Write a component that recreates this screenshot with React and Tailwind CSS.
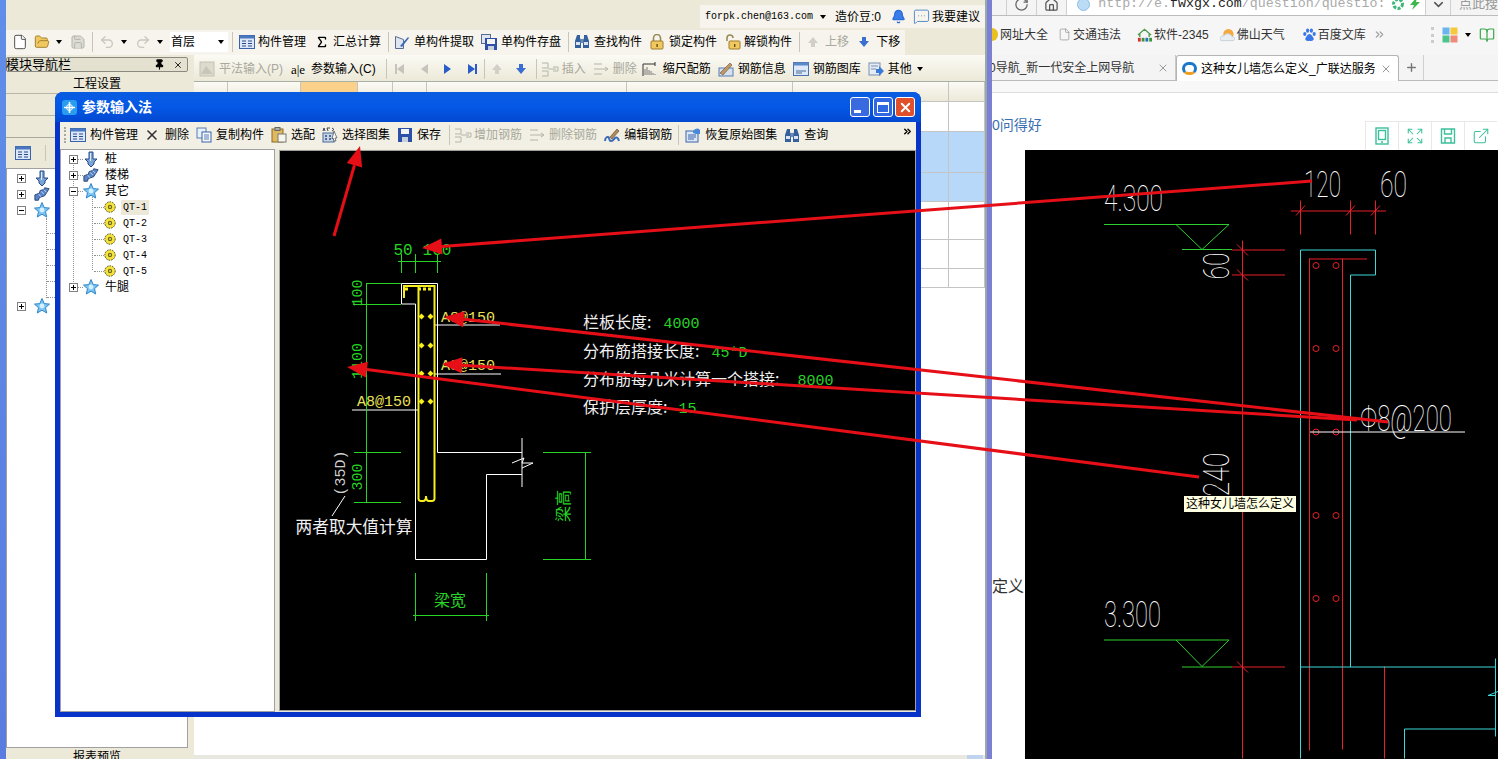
import React from 'react';
import clsx from 'clsx';
import { File, FolderOpen, Save, Undo2, Redo2, Sigma, Bell, MessageSquareMore, RotateCw, Home, ChevronDown, ChevronsRight, X, Plus, Expand, ExternalLink, BookOpen, Pin } from 'lucide-react';

const CJK = "Noto Sans CJK SC, sans-serif";
const MONO = "Liberation Mono, Noto Sans CJK SC, monospace";
const GREEN = '#25d425';

/* ---------- small toolbar icons ---------- */
const Caret = ({ className }) => (
  <span className={clsx('inline-block w-0 h-0 shrink-0 border-x-[3px] border-t-[4px] border-x-transparent border-t-black', className)} />
);

const Sep = ({ className }) => <span className={clsx('w-px h-[20px] bg-[#c8c6b8] shrink-0', className)} />;

const ManageIcon = () => (
  <svg width="16" height="14" viewBox="0 0 16 14" className="shrink-0">
    <rect x="0.5" y="0.5" width="15" height="13" fill="#dce8f8" stroke="#3a62a8" />
    <rect x="0.5" y="0.5" width="15" height="3" fill="#4a78c0" />
    <path d="M3 6h4M3 8.5h4M3 11h4M9 6h4M9 8.5h4M9 11h4" stroke="#2a4a88" />
  </svg>
);

const ExtractIcon = () => (
  <svg width="16" height="16" viewBox="0 0 16 16" className="shrink-0">
    <path d="M1.5 2.5v12h8v-9z" fill="#dfe6f2" stroke="#5a6c90" />
    <path d="M6 12l8-9 1 1-7 9z" fill="#3a6ab8" />
  </svg>
);

const DiskIcon = ({ small }) => (
  <svg width="16" height="16" viewBox="0 0 16 16" className="shrink-0">
    {small && <rect x="0.5" y="0.5" width="9" height="9" fill="#dfe6f2" stroke="#5a6c90" />}
    <rect x={small ? 4 : 1} y={small ? 4 : 1} width={small ? 12 : 14} height={small ? 12 : 14} fill="#2c50a8" />
    <rect x={small ? 6 : 4} y={small ? 5 : 2} width={small ? 8 : 8} height="5" fill="#f4f4f4" />
    <rect x={small ? 7 : 5} y={small ? 12 : 10} width="6" height={small ? 4 : 5} fill="#c8d0e0" />
  </svg>
);

const BinoIcon = () => (
  <svg width="16" height="15" viewBox="0 0 16 15" className="shrink-0">
    <path d="M3 1h3v3l1 2v8H1V7z" fill="#34609c" />
    <path d="M10 1h3l2 6v7H9V6l1-2z" fill="#34609c" />
    <rect x="2" y="8" width="4" height="3" fill="#d8e4f4" />
    <rect x="10" y="8" width="4" height="3" fill="#d8e4f4" />
    <rect x="6.5" y="5" width="3" height="4" fill="#6a8ab8" />
  </svg>
);

const LockIcon = ({ open }) => (
  <svg width="16" height="16" viewBox="0 0 16 16" className="shrink-0">
    <path d={open ? 'M2 7V4a3 3 0 0 1 6 0' : 'M4.5 7V4a3.5 3.5 0 0 1 7 0v3'} fill="none" stroke="#9a8a58" strokeWidth="1.6" />
    <rect x={open ? 4 : 2} y="7" width={open ? 11 : 12} height="8" rx="1" fill="#f0c860" stroke="#a07c28" />
    <rect x={open ? 9 : 7.4} y="10" width="1.4" height="3" fill="#6a4c10" />
  </svg>
);

const UpDown = ({ up, gray }) => (
  <svg width="16" height="14" viewBox="0 0 16 14" className="shrink-0">
    <path d={up ? 'M8 2l5 6h-3v4H6V8H3z' : 'M6 2h4v4h3l-5 6-5-6h3z'} fill={gray ? '#d0d0c8' : '#3a6ed0'} />
  </svg>
);

const NavTri = ({ dir, bar, gray }) => (
  <svg width="12" height="14" viewBox="0 0 12 14" className="shrink-0">
    <path d={dir === 'left' ? 'M10 2v10L3 7z' : 'M2 2v10l7-5z'} fill={gray ? '#c4c4bc' : '#2a5cc8'} />
    {bar && <rect x={dir === 'left' ? 1 : 9} y="2" width="2" height="10" fill={gray ? '#c4c4bc' : '#2a5cc8'} />}
  </svg>
);

const InsertIcon = ({ del }) => (
  <svg width="18" height="16" viewBox="0 0 18 16" className="shrink-0" fill="none" stroke="#b4b4a8">
    {del ? <path d="M1 3h8M1 8h13M1 13h8M12 6l3 2-3 2" /> : <path d="M1 2h6v5H1M1 10h6v5H1M7 8h8M12 6h5v4h-5" />}
  </svg>
);

const DrawingIcon = ({ gray }) => (
  <svg width="16" height="16" viewBox="0 0 16 16" className="shrink-0">
    {gray ? (
      <>
        <rect x="1" y="1" width="14" height="14" fill="#dddbcc" stroke="#c4c2b4" />
        <path d="M2 13l5-8 7 8z" fill="#c8c6b8" />
      </>
    ) : (
      <>
        <path d="M1 3h12M1 3v12M13 1v4" fill="none" stroke="#333" />
        <path d="M3 14V8M5 14V6M7 14V9M9 14V10M11 14V12M13 14V13" stroke="#777" />
      </>
    )}
  </svg>
);

const RebarInfoIcon = () => (
  <svg width="16" height="16" viewBox="0 0 16 16" className="shrink-0">
    <rect x="1" y="7" width="14" height="8" fill="#d4e0f0" stroke="#5a7cb0" />
    <path d="M2 12L12 2l2 2L5 14z" fill="#c09868" stroke="#6a5030" strokeWidth="0.6" />
  </svg>
);

const LibraryIcon = () => (
  <svg width="16" height="14" viewBox="0 0 16 14" className="shrink-0">
    <rect x="0.5" y="0.5" width="15" height="13" fill="#dce8f8" stroke="#4a72b0" />
    <rect x="0.5" y="0.5" width="15" height="3" fill="#5a88c8" />
    <path d="M3 9h10M3 11h6" stroke="#4a6a98" />
  </svg>
);

const OtherIcon = () => (
  <svg width="16" height="16" viewBox="0 0 16 16" className="shrink-0">
    <rect x="1" y="2" width="11" height="12" fill="#e4ecf6" stroke="#7a90b0" />
    <path d="M3 5h7M3 8h5" stroke="#7a90b0" />
    <path d="M8 8h3V5l5 5-5 5v-3H8z" fill="#3a7ad8" />
  </svg>
);

const CopyIcon = () => (
  <svg width="16" height="16" viewBox="0 0 16 16" className="shrink-0">
    <rect x="1" y="1" width="9" height="10" fill="#e8f0fa" stroke="#5a7cb0" />
    <rect x="6" y="5" width="9" height="10" fill="#f4f8fd" stroke="#3a62a8" />
    <path d="M8 8h5M8 10h5M8 12h5" stroke="#5a7cb0" />
  </svg>
);

const PasteIcon = () => (
  <svg width="16" height="16" viewBox="0 0 16 16" className="shrink-0">
    <rect x="1" y="2" width="11" height="13" fill="#e0b860" stroke="#8a6a20" />
    <rect x="4" y="0.5" width="5" height="3" fill="#b0b0a8" stroke="#666" />
    <rect x="7" y="7" width="8" height="8" fill="#f6f6f0" stroke="#7a7a70" />
  </svg>
);

const AtlasIcon = () => (
  <svg width="16" height="16" viewBox="0 0 16 16" className="shrink-0">
    <path d="M1 4l1-3 1 3M5 1l1 3M8 1H5M10 1l2 1.5L10 4" fill="none" stroke="#445" />
    <rect x="1" y="6" width="11" height="9" fill="#c8d4e4" stroke="#4a6a98" />
    <path d="M3 9h2M7 9h2M3 12h2M7 12h2" stroke="#2a4a88" strokeWidth="1.4" />
    <path d="M12 4l3 7-2 0 1 3-2 0-1-3-1 1z" fill="#f8f8f8" stroke="#333" strokeWidth="0.6" />
  </svg>
);

const EditRebarIcon = () => (
  <svg width="16" height="15" viewBox="0 0 16 15" className="shrink-0">
    <path d="M1 13c0-4 3-5 4-3s0 3 2 3 3-2 4-3 3-1 4 3" fill="none" stroke="#3a6ab8" strokeWidth="2" />
    <path d="M6 9l7-8 2 2-7 8z" fill="#b08a58" stroke="#5a4020" strokeWidth="0.6" />
  </svg>
);

const RestoreIcon = () => (
  <svg width="16" height="16" viewBox="0 0 16 16" className="shrink-0">
    <rect x="1" y="4" width="12" height="11" fill="#dce8f8" stroke="#3a62a8" />
    <path d="M3 8h8M3 10h8M3 12h6" stroke="#3a62a8" />
    <path d="M8 6a4 4 0 0 1 7-3v4h-4z" fill="#4a88d8" />
  </svg>
);

const Tool = ({ icon, label, gray, gap = 'gap-[4px]', className }) => (
  <div className={clsx('flex items-center whitespace-nowrap shrink-0', gap, gray ? 'text-[#a8a89c]' : 'text-black', className)}>
    {icon}
    <span>{label}</span>
  </div>
);

/* ---------- tree icons ---------- */
const Star = () => (
  <svg width="16" height="16" viewBox="0 0 16 16" className="shrink-0">
    <path d="M8 .5l2.2 5.1 5.3.5-4 3.6 1.2 5.3L8 12.2l-4.7 2.8 1.2-5.3-4-3.6 5.3-.5z" fill="#7cc4f2" stroke="#2f86c8" />
    <circle cx="8" cy="8" r="2.4" fill="#d6f0ff" />
  </svg>
);

const Pile = () => (
  <svg width="16" height="16" viewBox="0 0 16 16" className="shrink-0">
    <path d="M6 1h4v7h4l-3 3v2l-3 3-3-3v-2L2 8h4z" fill="#7aa4d8" stroke="#2a4a88" />
    <path d="M7.5 2v8" stroke="#e0ecf8" />
  </svg>
);

const Stairs = () => (
  <svg width="16" height="16" viewBox="0 0 18 16" className="shrink-0">
    <path d="M1 15V9l5-2 1-3 4-1 1-2 5 1-5 8-6 2-1 3z" fill="#5a84c8" stroke="#23406f" />
    <path d="M5 8l3 3M8 5l3 3M11 3l3 3" stroke="#cfe0f4" />
  </svg>
);

const Gear = () => (
  <svg width="12" height="12" viewBox="0 0 12 12" className="shrink-0">
    <circle cx="6" cy="6" r="5.2" fill="#f6e43c" stroke="#4a4a1a" strokeDasharray="1.6 1" />
    <circle cx="6" cy="6" r="2.2" fill="#6a6a20" />
    <circle cx="6" cy="6" r="1" fill="#f6e43c" />
  </svg>
);

const Box = ({ open }) => (
  <span className="relative z-10 flex items-center justify-center w-[9px] h-[9px] shrink-0 bg-white border border-[#808080]">
    <span className="absolute w-[5px] h-px bg-black" />
    {!open && <span className="absolute w-px h-[5px] bg-black" />}
  </span>
);

const TreeRow = ({ box, icon, label, sub, active }) => (
  <div className={clsx('relative flex items-center h-[16px] whitespace-nowrap', sub ? 'pl-[45px]' : 'pl-[8px]')}>
    {box}
    {!sub && <span className="w-[5px] border-t border-dotted border-[#909090]" />}
    {sub && <span className="w-[10px] border-t border-dotted border-[#909090] -ml-[12px]" />}
    {icon}
    {sub ? (
      <span className={clsx("ml-[5px] px-[2px] font-['Liberation_Mono',monospace] text-[10px]", active && 'bg-[#ece9d8]')}>{label}</span>
    ) : (
      <span className="ml-[6px] text-[12px]">{label}</span>
    )}
  </div>
);

/* ---------- CAD drawings ---------- */
const Cadtext = ({ x, y, size, fill = GREEN, rotate, children, font = MONO, ...rest }) => (
  <text x={x} y={y} fontSize={size} fill={fill} fontFamily={font} textAnchor="middle" transform={rotate ? `rotate(${rotate} ${x} ${y})` : undefined} {...rest}>
    {children}
  </text>
);

const ParamDrawing = () => {
  const dots = [316.5, 345.5, 373.5, 401.5];
  return (
    <svg viewBox="280 151 635 559" className="block w-full h-full" fill="none">
      {/* white outline */}
      <path d="M401.5 304V283.5H437.5V452.5H522M401.5 304H415.5V559.5H486.5V474.5H522M522 438V487M512 463L524 458L522 463H533L522 468M434 325H500M434 374H501M352 410H418M345 496L332 516" stroke="#fff" />
      {/* yellow rebar */}
      <path d="M404 298V286H434.5V499Q434 501 432 501H429Q426 501 426 496Q426 501 423 501H421Q419 501 418.5 499V287" stroke="#f6ee1e" strokeWidth="2" />
      <path d="M405 289h4M418 289h15" stroke="#f6ee1e" strokeWidth="3" strokeDasharray="3 2" />
      {dots.map((y) => (
        <g key={y} fill="#f6ee1e">
          <path d={`M421.5 ${y - 3}l3 3-3 3-3-3z`} />
          <path d={`M430.5 ${y - 3}l3 3-3 3-3-3z`} />
        </g>
      ))}
      {/* green dimensions */}
      <path d="M366.5 283V503M366 283.5H401M353 304.5H401M354 452.5H401M354 502.5H401M401.5 254V273M415.5 254V273M437.5 254V273M398 261.5H441M543 452.5H591M543 559.5H591M585.5 452V560M415.5 573V621M486.5 573V621M413 615.5H489" stroke={GREEN} />
      <Cadtext x={403} y={255} size={16}>50</Cadtext>
      <Cadtext x={437} y={255} size={16}>160</Cadtext>
      <Cadtext x={362} y={293} size={15} rotate={-90}>100</Cadtext>
      <Cadtext x={362} y={361} size={15} rotate={-90}>1100</Cadtext>
      <Cadtext x={362} y={477} size={15} rotate={-90}>300</Cadtext>
      <Cadtext x={345} y={473} size={15} fill="#cfcfcf" rotate={-90}>(35D)</Cadtext>
      <Cadtext x={354} y={533} size={16.7} fill="#f0f0f0" font={CJK}>两者取大值计算</Cadtext>
      <Cadtext x={569} y={506} size={16} rotate={-90} font={CJK}>梁高</Cadtext>
      <Cadtext x={450} y={606} size={16} font={CJK}>梁宽</Cadtext>
      <g fill="#ece05a" fontSize="15" fontFamily={MONO}>
        <text x="441" y="322">A8@150</text>
        <text x="441" y="370">A8@150</text>
        <text x="357" y="406">A8@150</text>
      </g>
      {/* parameter list */}
      <g fontSize="16" fontFamily={CJK} fill="#f0f0f0">
        <text x="583" y="328">栏板长度:<tspan fill={GREEN} fontSize="15" fontFamily={MONO} dx="12">4000</tspan></text>
        <text x="583" y="357">分布筋搭接长度:<tspan fill={GREEN} fontSize="15" fontFamily={MONO} dx="12">45*D</tspan></text>
        <text x="583" y="385">分布筋每几米计算一个搭接:<tspan fill={GREEN} fontSize="15" fontFamily={MONO} dx="18">8000</tspan></text>
        <text x="583" y="413">保护层厚度:<tspan fill={GREEN} fontSize="15" fontFamily={MONO} dx="11">15</tspan></text>
      </g>
    </svg>
  );
};

const ThinText = ({ x, y, w, size = 36, rotate, children }) => (
  <text
    x={x}
    y={y}
    fontSize={size}
    fontWeight="100"
    fill="#fff"
    fontFamily="Roboto, Lato, sans-serif"
    textLength={w}
    lengthAdjust="spacingAndGlyphs"
    transform={rotate ? `rotate(${rotate} ${x} ${y})` : undefined}
  >
    {children}
  </text>
);

const SectionDrawing = () => {
  const rows = [266, 349, 432.5, 516, 599];
  return (
    <svg viewBox="1025 151 473 608" className="block w-full h-full" fill="none">
      {/* level marks */}
      <path d="M1104 225H1229L1202 250L1176 225M1182 250H1232M1104 640.5H1229L1202 667L1176 640.5M1182 667.5H1232" stroke="#2fce2f" />
      {/* red construction lines */}
      <path d="M1242.5 241V759M1232 250.5H1285M1232 275.5H1285M1232 667.5H1285M1291 211.5H1386M1300.5 201V235M1350.5 201V235M1375.5 201V235M1309.5 259V751M1342.5 259V750M1309 259.5H1367M1384.5 667V759" stroke="#e8202a" />
      <path d="M1237 245L1248 256M1237 270L1248 281M1237 662L1248 673M1296 216L1305 206M1346 216L1355 206M1371 216L1380 206" stroke="#e8202a" />
      {rows.map((y) => (
        <g key={y} stroke="#e8202a">
          <circle cx="1316" cy={y} r="3" />
          <circle cx="1336" cy={y} r="3" />
        </g>
      ))}
      {/* cyan outline */}
      <path d="M1300.5 759V250.5H1375.5V275.5H1350.5V667.5M1300 667.5H1495.5M1495.5 659V737M1495.5 696H1488L1498 692M1404.5 759V729.5H1495" stroke="#3fd8d8" />
      <path d="M1310 432.5H1465" stroke="#fff" />
      <ThinText x={1104} y={211} w={59}>4.300</ThinText>
      <ThinText x={1304} y={197} w={37}>120</ThinText>
      <ThinText x={1380} y={197} w={27}>60</ThinText>
      <ThinText x={1229} y={280} w={27} rotate={-90}>60</ThinText>
      <ThinText x={1104} y={627} w={57}>3.300</ThinText>
      <ThinText x={1360} y={431} w={92}>Φ8@200</ThinText>
      <ThinText x={1229} y={497} w={44} rotate={-90}>240</ThinText>
    </svg>
  );
};

const Arrow = ({ from, to }) => {
  const dx = to[0] - from[0];
  const dy = to[1] - from[1];
  const len = Math.hypot(dx, dy);
  const ux = dx / len;
  const uy = dy / len;
  const bx = to[0] - ux * 20;
  const by = to[1] - uy * 20;
  return (
    <g>
      <line x1={from[0]} y1={from[1]} x2={bx} y2={by} stroke="#e60f17" strokeWidth="3" />
      <polygon points={`${to[0]},${to[1]} ${bx - uy * 8},${by + ux * 8} ${bx + uy * 8},${by - ux * 8}`} fill="#e60f17" />
    </g>
  );
};

/* ---------- main application behind the dialog ---------- */
const GRID_ROWS = [
  'h-[20px] bg-gradient-to-b from-[#fbfaf4] to-[#ece9d8]',
  'h-[30px] bg-white',
  'h-[41px] bg-[#b8d8fa]',
  'h-[29px] bg-[#b8d8fa]',
  'h-[38px] bg-white',
  'h-[29px] bg-white',
  'h-[19px] bg-white',
];
const GRID_COLS = ['w-[34px]', 'w-[73px]', 'w-[57px]', 'w-[35px]', 'w-[34px]', 'w-[200px]', 'w-[166px]', 'w-[156px]', 'w-[36px]'];

const DataGrid = () => (
  <div className="flex-1 bg-white flex flex-col min-h-0">
    {GRID_ROWS.map((row, r) => (
      <div key={r} className={clsx('flex border-b border-[#c4c4c4]', row)}>
        {GRID_COLS.map((col, c) => (
          <div key={c} className={clsx('h-full border-r border-[#c4c4c4]', col, r === 0 && c === 2 && 'bg-[#fbd08a]')} />
        ))}
      </div>
    ))}
    <div className="mt-auto h-[4px] bg-[#e8e8e0] flex justify-end">
      <span className="w-[16px] bg-[#c0d4f0] mr-[2px]" />
    </div>
  </div>
);

const TopToolbar = () => (
  <div className="h-[25px] w-[899px] flex items-center bg-[#f6f4ec] text-[12px] pb-[2px]">
    <File size={16} strokeWidth={1.4} className="ml-[6px] shrink-0 text-[#444] fill-white" />
    <FolderOpen size={16} strokeWidth={1.4} className="ml-[6px] shrink-0 text-[#a07c28] fill-[#f0c860]" />
    <Caret className="ml-[6px]" />
    <Save size={16} strokeWidth={1.4} className="ml-[8px] shrink-0 text-[#b0b0a8] fill-[#dcdcd4]" />
    <Sep className="ml-[6px]" />
    <Undo2 size={16} strokeWidth={2} className="ml-[6px] shrink-0 text-[#c8c8c0]" />
    <Caret className="ml-[6px] border-t-[#a8a8a0]" />
    <Redo2 size={16} strokeWidth={2} className="ml-[8px] shrink-0 text-[#c8c8c0]" />
    <Caret className="ml-[6px] border-t-[#a8a8a0]" />
    <div className="ml-[7px] w-[58px] h-[20px] bg-white flex items-center justify-between pl-[1px] pr-[4px] shrink-0">
      <span>首层</span>
      <Caret />
    </div>
    <Sep className="ml-[4px]" />
    <Tool className="ml-[6px]" gap="gap-[3px]" icon={<ManageIcon />} label="构件管理" />
    <Tool className="ml-[9px]" icon={<Sigma size={14} strokeWidth={2.4} className="shrink-0" />} label="汇总计算" />
    <Sep className="ml-[7px]" />
    <Tool className="ml-[5px]" icon={<ExtractIcon />} label="单构件提取" />
    <Tool className="ml-[7px]" icon={<DiskIcon small />} label="单构件存盘" />
    <Sep className="ml-[7px]" />
    <Tool className="ml-[5px]" icon={<BinoIcon />} label="查找构件" />
    <Tool className="ml-[7px]" icon={<LockIcon />} label="锁定构件" />
    <Tool className="ml-[8px]" gap="gap-[3px]" icon={<LockIcon open />} label="解锁构件" />
    <Sep className="ml-[7px]" />
    <Tool className="ml-[5px]" gray icon={<UpDown up gray />} label="上移" />
    <Tool className="ml-[7px]" icon={<UpDown />} label="下移" />
  </div>
);

const SecondToolbar = () => (
  <div className="h-[27px] flex items-center bg-gradient-to-b from-[#fbfaf4] to-[#ece9d8] border-b border-[#a8b0a8] text-[12px] pt-[2px]">
    <Tool className="ml-[5px]" gray icon={<DrawingIcon gray />} label="平法输入(P)" />
    <Tool className="ml-[8px]" icon={<span className="w-[16px] font-['Liberation_Serif',serif] text-[13px] leading-none">a|e</span>} label="参数输入(C)" />
    <Sep className="ml-[10px]" />
    <span className="ml-[7px] flex shrink-0"><NavTri dir="left" bar gray /></span>
    <span className="ml-[12px] flex shrink-0"><NavTri dir="left" gray /></span>
    <span className="ml-[12px] flex shrink-0"><NavTri dir="right" /></span>
    <span className="ml-[12px] flex shrink-0"><NavTri dir="right" bar /></span>
    <Sep className="ml-[6px]" />
    <span className="ml-[4px] flex shrink-0"><UpDown up gray /></span>
    <span className="ml-[8px] flex shrink-0"><UpDown /></span>
    <Sep className="ml-[7px]" />
    <Tool className="ml-[4px]" gray gap="gap-[3px]" icon={<InsertIcon />} label="插入" />
    <Tool className="ml-[7px]" gray gap="gap-[2px]" icon={<InsertIcon del />} label="删除" />
    <Tool className="ml-[5px]" gap="gap-[5px]" icon={<DrawingIcon />} label="缩尺配筋" />
    <Tool className="ml-[7px]" icon={<RebarInfoIcon />} label="钢筋信息" />
    <Tool className="ml-[7px]" icon={<LibraryIcon />} label="钢筋图库" />
    <Tool className="ml-[7px]" icon={<OtherIcon />} label="其他" />
    <Caret className="ml-[5px]" />
  </div>
);

const NavPanel = () => (
  <div className="w-[182px] flex flex-col pt-[2px] text-[12px]">
    <div className="h-[15px] flex items-center border border-[#8a8a80] rounded-[2px] bg-[#e4e1d0]">
      <span className="-ml-px text-[13px] leading-none">模块导航栏</span>
      <Pin size={11} strokeWidth={2.4} className="ml-auto mr-[8px] fill-black" />
      <X size={10} className="mr-[4px]" />
    </div>
    <div className="h-[22px] flex items-center justify-center border-b border-[#b8b6a8] pt-[2px]">工程设置</div>
    <div className="h-[22px] border-b border-[#b8b6a8]" />
    <div className="h-[22px] border-b border-[#a8a89c]" />
    <div className="h-[30px] flex items-center pl-[9px] gap-[14px] bg-[#ece9d8]">
      <ManageIcon />
      <span className="w-px h-[16px] bg-[#c8c6b8]" />
      <X size={14} strokeWidth={2.5} />
    </div>
    <div className="relative flex-1 bg-white border border-[#a0a0a0]">
      <div className="relative pl-[10px] pt-[1px] flex flex-col">
        <div className="h-[16px] flex items-center gap-[8px]"><Box /><Pile /></div>
        <div className="h-[16px] flex items-center gap-[8px]"><Box /><Stairs /></div>
        <div className="h-[16px] flex items-center gap-[8px]"><Box open /><Star /></div>
        <div className="h-[80px] ml-[29px] flex flex-col border-l border-dotted border-[#909090]">
          <span className="h-[16px] w-[14px] border-b border-dotted border-[#909090]" />
          <span className="h-[16px] w-[14px] border-b border-dotted border-[#909090]" />
          <span className="h-[16px] w-[14px] border-b border-dotted border-[#909090]" />
          <span className="h-[16px] w-[14px] border-b border-dotted border-[#909090]" />
          <span className="h-[16px] w-[14px] border-b border-dotted border-[#909090]" />
        </div>
        <div className="h-[16px] flex items-center gap-[8px]"><Box /><Star /></div>
      </div>
    </div>
    <div className="h-[11px] overflow-hidden text-center leading-[18px] bg-[#ece9d8]">报表预览</div>
  </div>
);

const MainApp = () => (
  <div className="w-[979px] h-full bg-[#ece9d8] flex flex-col shrink-0">
    <div className="h-[30px] flex justify-end items-start pt-[5px]">
      <div className="w-[285px] h-[23px] bg-[#f6f4ec] flex items-center text-[12px] pl-[5px]">
        <span className="font-['Liberation_Mono',monospace] text-[10px] w-[108px]">forpk.chen@163.com</span>
        <Caret className="ml-[7px]" />
        <span className="ml-[9px] w-[52px]">造价豆:0</span>
        <Bell size={15} className="ml-[4px] text-[#2a6cd8] fill-[#3a7ce8] shrink-0" />
        <MessageSquareMore size={17} strokeWidth={1.2} className="ml-[7px] text-[#3a7cc8] shrink-0" />
        <span className="ml-[2px]">我要建议</span>
      </div>
    </div>
    <TopToolbar />
    <div className="flex-1 flex min-h-0">
      <NavPanel />
      <div className="w-[6px]" />
      <div className="flex-1 flex flex-col min-w-0 overflow-hidden">
        <SecondToolbar />
        <DataGrid />
      </div>
    </div>
  </div>
);

/* ---------- parameter dialog ---------- */
const WinBtn = ({ className, children }) => (
  <span className={clsx('w-[20px] h-[20px] rounded-[3px] border border-white flex items-center justify-center shrink-0', className)}>{children}</span>
);

const ParamDialog = () => (
  <div className="absolute left-[55px] top-[92px] w-[866px] h-[625px] rounded-t-[8px] bg-[#0833c8] flex flex-col overflow-hidden z-10">
    <div className="h-[30px] shrink-0 flex items-center pl-[7px] pr-[6px] bg-gradient-to-b from-[#0a5ce0] via-[#0458e6] to-[#0348d0]">
      <svg width="15" height="15" viewBox="0 0 15 15" className="shrink-0">
        <rect width="15" height="15" rx="3" fill="#2a9cf0" />
        <path d="M7.5 2v11M2 7.5h11" stroke="#fff" strokeWidth="1.6" />
        <circle cx="7.5" cy="7.5" r="3" fill="none" stroke="#fff" />
      </svg>
      <span className="ml-[5px] text-white font-bold text-[14px]">参数输入法</span>
      <WinBtn className="ml-auto bg-[#3a6ae0]"><span className="w-[7px] h-[3px] bg-white self-end mb-[3px] mr-[6px]" /></WinBtn>
      <WinBtn className="ml-[3px] bg-[#2f68e0]"><span className="w-[12px] h-[11px] border border-t-[3px] border-white" /></WinBtn>
      <WinBtn className="ml-[2px] bg-[#e0502a]"><X size={15} strokeWidth={3} className="text-white" /></WinBtn>
    </div>
    <div className="flex-1 mx-[5px] mb-[5px] bg-[#ece9d8] flex flex-col min-h-0">
      <div className="h-[27px] shrink-0 flex items-center text-[12px] bg-[#f2f0e4] pb-[1px]">
        <span className="ml-[4px] w-[2px] h-[16px] border-l-2 border-dotted border-[#a8a89c]" />
        <Tool className="ml-[4px]" icon={<ManageIcon />} label="构件管理" />
        <Tool className="ml-[6px]" gap="gap-[5px]" icon={<X size={16} strokeWidth={2.4} className="shrink-0 text-[#333]" />} label="删除" />
        <Tool className="ml-[7px]" icon={<CopyIcon />} label="复制构件" />
        <Tool className="ml-[7px]" icon={<PasteIcon />} label="选配" />
        <Tool className="ml-[7px]" icon={<AtlasIcon />} label="选择图集" />
        <Tool className="ml-[7px]" icon={<DiskIcon />} label="保存" />
        <Sep className="ml-[8px]" />
        <Tool className="ml-[4px]" gray gap="gap-[2px]" icon={<InsertIcon />} label="增加钢筋" />
        <Tool className="ml-[7px]" gray gap="gap-[2px]" icon={<InsertIcon del />} label="删除钢筋" />
        <Tool className="ml-[7px]" icon={<EditRebarIcon />} label="编辑钢筋" />
        <Sep className="ml-[6px]" />
        <Tool className="ml-[6px]" icon={<RestoreIcon />} label="恢复原始图集" />
        <Tool className="ml-[7px]" icon={<BinoIcon />} label="查询" />
        <ChevronsRight size={11} strokeWidth={3} className="ml-auto mr-[3px] mb-[8px]" />
      </div>
      <div className="flex-1 flex min-h-0">
        <div className="relative w-[215px] pt-[1px] bg-white border border-[#a0a0a0]">
          <span className="absolute left-[12px] top-[8px] h-[128px] border-l border-dotted border-[#909090]" />
          <span className="absolute left-[31px] top-[40px] h-[80px] border-l border-dotted border-[#909090]" />
          <TreeRow box={<Box />} icon={<Pile />} label="桩" />
          <TreeRow box={<Box />} icon={<Stairs />} label="楼梯" />
          <TreeRow box={<Box open />} icon={<Star />} label="其它" />
          <TreeRow sub icon={<Gear />} label="QT-1" active />
          <TreeRow sub icon={<Gear />} label="QT-2" />
          <TreeRow sub icon={<Gear />} label="QT-3" />
          <TreeRow sub icon={<Gear />} label="QT-4" />
          <TreeRow sub icon={<Gear />} label="QT-5" />
          <TreeRow box={<Box />} icon={<Star />} label="牛腿" />
        </div>
        <div className="w-[5px]" />
        <div className="w-[635px] h-[559px] mt-[2px] bg-black outline outline-1 outline-[#a0a0a0]">
          <ParamDrawing />
        </div>
      </div>
    </div>
  </div>
);

/* ---------- browser on the right ---------- */
const BookMark = ({ icon, label, className }) => (
  <div className={clsx('flex items-center gap-[2px] whitespace-nowrap shrink-0 text-[12px] text-[#333]', className)}>
    {icon}
    <span>{label}</span>
  </div>
);

const TabletIcon = () => (
  <svg width="16" height="18" viewBox="0 0 16 18" fill="none" stroke="#3cc09c" strokeWidth="1.4">
    <rect x="2" y="1" width="12" height="16" />
    <rect x="4.5" y="3.5" width="7" height="9" />
    <path d="M7 15h2" />
  </svg>
);

const DiskOutline = () => (
  <svg width="16" height="18" viewBox="0 0 16 18" fill="none" stroke="#3cc09c" strokeWidth="1.4">
    <path d="M1.5 2h13v14h-13z" />
    <path d="M4.5 2v5h7V2M5 16v-5h6v5" />
  </svg>
);

const ExpandIcon = () => <Expand size={18} strokeWidth={1.4} className="text-[#3cc09c]" />;
const ShareIcon = () => <ExternalLink size={18} strokeWidth={1.4} className="text-[#3cc09c]" />;
const PAGE_TOOLS = [TabletIcon, ExpandIcon, DiskOutline, ShareIcon];

const Browser = () => (
  <div className="flex-1 min-w-0 h-full bg-white flex flex-col overflow-hidden">
    {/* address row */}
    <div className="h-[16px] shrink-0 flex bg-[#f4f4f4] border-b border-[#bcbcbc] overflow-hidden">
      <span className="w-[15px] border-r border-[#d0d0d0]" />
      <span className="w-[30px] flex justify-center items-start border-r border-[#d0d0d0]"><RotateCw size={15} strokeWidth={2} className="-mt-[3px] text-[#666]" /></span>
      <span className="w-[31px] flex justify-center items-start border-r border-[#d0d0d0]"><Home size={15} strokeWidth={2} className="-mt-[3px] text-[#555]" /></span>
      <div className="w-[360px] bg-white flex items-start pl-[10px] overflow-hidden">
        <span className="w-[13px] h-[13px] mt-[-2px] rounded-full bg-[#bcdcf6] border border-[#8cbce8] shrink-0" />
        <span className="ml-[8px] w-[288px] -mt-[6px] overflow-hidden font-['Liberation_Mono',monospace] text-[13.3px] leading-[20px] text-[#aaa] whitespace-nowrap">
          http://e.<span className="text-[#222]">fwxgx.com</span>/question/questio:
        </span>
        <svg width="12" height="12" viewBox="0 0 12 12" className="ml-[6px] -mt-[2px] shrink-0">
          <circle cx="6" cy="6" r="4.5" fill="none" stroke="#3cb878" strokeWidth="3" strokeDasharray="3 1.4" />
        </svg>
        <svg width="12" height="13" viewBox="0 0 12 13" className="ml-[5px] -mt-[3px] shrink-0">
          <path d="M8 0L1 8h4l-2 5 8-8H7z" fill="#3cb84a" />
        </svg>
      </div>
      <span className="w-[2px] bg-white" />
      <span className="w-[26px] flex justify-center items-start border-x border-[#d0d0d0]"><ChevronDown size={15} strokeWidth={2.4} className="-mt-[3px] text-[#555]" /></span>
      <span className="ml-[8px] -mt-[6px] text-[13px] text-[#999] whitespace-nowrap">点此搜</span>
    </div>
    {/* bookmarks */}
    <div className="h-[39px] shrink-0 flex items-center bg-[#f6f6f6] overflow-hidden pb-[2px]">
      <span className="w-[6px] h-[13px] rounded-r-full bg-[#e8c020] shrink-0" />
      <BookMark label="网址大全" className="ml-[2px]" />
      <BookMark className="ml-[10px]" label="交通违法" icon={<File size={13} strokeWidth={1.2} className="text-[#888]" />} />
      <BookMark className="ml-[16px]" label="软件-2345" icon={
        <svg width="15" height="16" viewBox="0 0 16 16" fill="none">
          <path d="M1 8l7-6 7 6M3 7v3M13 7v3" stroke="#4a9a4a" strokeWidth="1.4" />
          <rect x="1" y="11" width="3" height="4" fill="#d83030" />
          <rect x="5" y="11" width="3" height="4" fill="#3a9a3a" />
          <rect x="9" y="11" width="3" height="4" fill="#2a70c0" />
          <rect x="13" y="11" width="3" height="4" fill="#3a9a3a" />
        </svg>
      } />
      <BookMark className="ml-[11px]" label="佛山天气" icon={
        <svg width="15" height="14" viewBox="0 0 16 14">
          <circle cx="9" cy="6" r="5.5" fill="#f6a83c" />
          <path d="M1 13a3 3 0 0 1 3-5 5 5 0 0 1 9 1 2 2 0 0 1 1 4z" fill="#e8eef4" stroke="#c8d0d8" />
        </svg>
      } />
      <BookMark className="ml-[18px]" label="百度文库" icon={
        <svg width="13" height="14" viewBox="0 0 13 14" fill="#3a78e8">
          <ellipse cx="1.8" cy="6" rx="1.6" ry="2" />
          <ellipse cx="4.6" cy="2.6" rx="1.6" ry="2.2" />
          <ellipse cx="8.4" cy="2.6" rx="1.6" ry="2.2" />
          <ellipse cx="11.2" cy="6" rx="1.6" ry="2" />
          <path d="M6.5 6c-2 0-3 2.500-4 4-1 2 1 3.500 4 2.800 3 .7 5-.8 4-2.800-1-1.500-2-4-4-4z" />
        </svg>
      } />
      <ChevronsRight size={13} className="ml-[7px] text-[#999] shrink-0" />
      <span className="ml-[45px] w-[3px] h-[16px] border-l-[3px] border-dotted border-[#ccc] shrink-0" />
      <svg width="16" height="16" viewBox="0 0 16 16" className="ml-[8px] shrink-0">
        <rect x="0.5" y="0.5" width="7" height="7" fill="#6ab4f0" />
        <rect x="8.5" y="0.5" width="7" height="7" fill="#f6c83c" />
        <rect x="0.5" y="8.5" width="7" height="7" fill="#4cc48a" />
        <rect x="8.5" y="8.5" width="7" height="7" fill="#f08a7a" />
      </svg>
      <Caret className="ml-[7px] border-t-[#888]" />
      <BookOpen size={16} strokeWidth={1.8} className="ml-[8px] text-[#3aa84a] shrink-0" />
    </div>
    {/* tabs */}
    <div className="h-[26px] shrink-0 flex items-stretch bg-[#f4f4f4] border-b border-[#bcbcbc] text-[12px]">
      <div className="w-[184px] flex items-center overflow-hidden text-[#333] whitespace-nowrap border-r border-[#c8c8c8]">
        <span className="-ml-[3px]">0导航_新一代安全上网导航</span>
        <X size={12} className="ml-auto mr-[6px] text-[#999] shrink-0" />
      </div>
      <div className="w-[223px] -mb-px bg-white flex items-center border border-b-0 border-[#b4b4b4] rounded-t-[3px] pl-[5px] overflow-hidden whitespace-nowrap">
        <span className="w-[15px] h-[13px] rounded-full border-[3px] border-[#1a78c8] border-b-[#f0a020] shrink-0" />
        <span className="ml-[4px] w-[174px] overflow-hidden">这种女儿墙怎么定义_广联达服务</span>
        <X size={12} className="ml-[5px] text-[#999] shrink-0" />
      </div>
      <div className="w-[25px] flex items-center justify-center border-r border-[#d0d0d0]"><Plus size={13} strokeWidth={2.6} className="text-[#777]" /></div>
    </div>
    <div className="h-[12px] shrink-0 bg-[#f8f8f8] border-b border-[#dcdcdc]" />
    {/* page */}
    <div className="relative flex-1 flex min-h-0 bg-white">
      <div className="w-[33px] shrink-0 flex flex-col text-[14px] whitespace-nowrap">
        <span className="mt-[22px] text-[#3a70b0] leading-[20px]">0问得好</span>
        <span className="mt-[442px] text-[16px] text-[#333] leading-[20px]">定义</span>
      </div>
      <div className="flex-1 flex flex-col min-w-0 z-[1]">
        <div className="h-[57px] shrink-0 flex justify-end items-end">
          <div className="h-[29px] mr-[1px] flex border-t border-[#e8e8e8]">
            {PAGE_TOOLS.map((Icon, i) => (
              <span key={i} className="w-[33px] flex items-center justify-center border-l border-[#e8e8e8]">
                <Icon />
              </span>
            ))}
          </div>
        </div>
        <div className="flex-1 bg-black min-h-0">
          <SectionDrawing />
        </div>
      </div>
    </div>
  </div>
);

export default function App() {
  return (
    <div className="relative w-[1498px] h-[759px] overflow-hidden flex bg-white text-black font-['Liberation_Sans','Noto_Sans_CJK_SC',sans-serif]">
      <div className="w-[6px] h-full bg-gradient-to-b from-[#5f8ee8] to-[#5a7ce0] shrink-0" />
      <MainApp />
      <div className="w-[2px] h-full bg-[#9aa8a8] shrink-0" />
      <div className="w-[5px] h-full bg-[#7b80d4] shrink-0" />
      <Browser />
      <ParamDialog />
      {/* annotation arrows drawn over the screenshot */}
      <svg viewBox="0 0 1498 759" className="absolute inset-0 w-[1498px] h-[759px] pointer-events-none z-20">
        <Arrow from={[334, 236]} to={[360, 146]} />
        <Arrow from={[1312, 181]} to={[422, 248]} />
        <Arrow from={[1388, 422]} to={[444, 317]} />
        <Arrow from={[1357, 420]} to={[442, 364]} />
        <Arrow from={[1199, 477]} to={[347, 367]} />
      </svg>
      <div className="absolute left-[1184px] top-[496px] w-[112px] h-[16px] bg-[#ffffe1] text-[12px] leading-[16px] text-center text-black whitespace-nowrap z-30">
        这种女儿墙怎么定义
      </div>
    </div>
  );
}
